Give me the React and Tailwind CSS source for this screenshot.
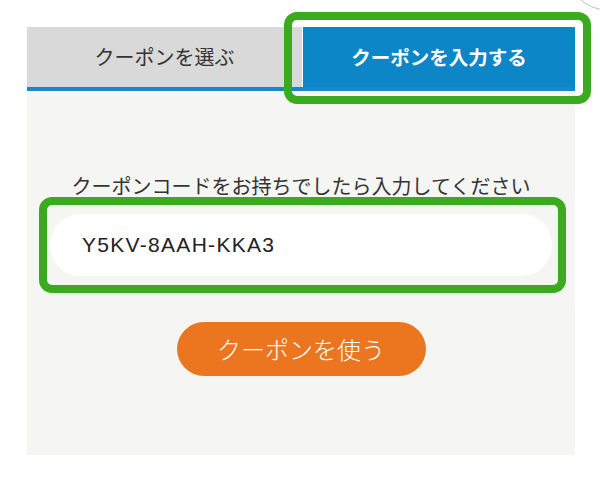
import React from "react";

export default function App() {
  const jp = { fontFamily: '"Noto Sans CJK JP", "Noto Sans", sans-serif' };
  return (
    <div
      className="relative w-[600px] h-[490px] bg-white overflow-hidden pl-[27px] pt-[27px]"
      style={jp}
    >
      {/* partial circle at top right */}
      <div className="absolute left-[570px] top-[-60px] w-[70px] h-[70px] rounded-full border-[1.5px] border-[#bdbdbd]" />

      <div className="w-[548px]">
        {/* tabs */}
        <div className="flex h-[60px]">
          <div className="w-[275px] bg-[#d9d9d9] flex items-center justify-center text-[20px] text-[#333]">
            クーポンを選ぶ
          </div>
          <div className="relative flex-1 ml-[1px] bg-[#0d86c7] flex items-center justify-center text-[19.5px] font-bold text-white">
            クーポンを入力する
            <div className="absolute left-[-19px] right-[-16px] top-[-15px] bottom-[-17px] border-[8px] border-[#3aab1f] rounded-[13px]" />
          </div>
        </div>
        <div className="h-[4px] bg-[#1a87cb]" />

        {/* content */}
        <div className="h-[364px] bg-[#f5f5f3] flex flex-col items-center pt-[81px]">
          <div className="text-[20px] leading-[28px] text-[#333]">
            クーポンコードをお持ちでしたら入力してください
          </div>
          <div className="relative mt-[14px] w-[502px] h-[62px] rounded-full bg-white flex items-center pl-[32px]">
            <span
              className="text-[21px] text-[#222] tracking-[1.3px]"
              style={{ fontFamily: '"Liberation Sans", Arial, sans-serif' }}
            >
              Y5KV-8AAH-KKA3
            </span>
            <div className="absolute left-[-11px] right-[-14px] top-[-17px] bottom-[-17px] border-[8px] border-[#3aab1f] rounded-[13px]" />
          </div>
          <button className="mt-[46px] w-[249px] h-[54px] rounded-full bg-[#ec7520] text-white text-[24px] font-light flex items-center justify-center">
            クーポンを使う
          </button>
        </div>
      </div>
    </div>
  );
}
